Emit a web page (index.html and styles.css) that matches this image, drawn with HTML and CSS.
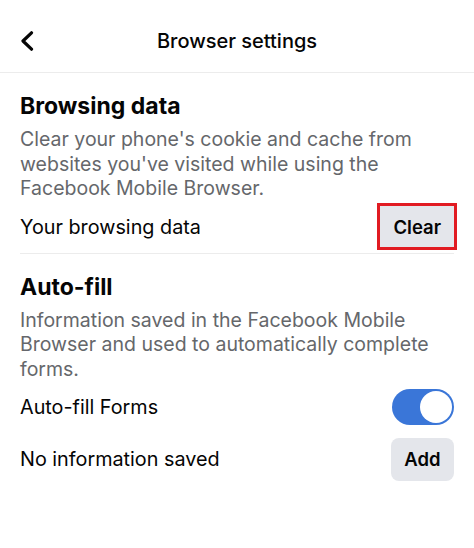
FILE: index.html
```html
<!DOCTYPE html>
<html lang="en">
<head>
    <meta charset="UTF-8">
    <meta name="viewport" content="width=device-width, initial-scale=1.0">
    <title>Browser settings</title>
    <link rel="stylesheet" href="styles.css">
</head>
<body>
    <header class="top-bar">
        <button class="back-button" aria-label="Back">
            <svg width="16" height="20" viewBox="0 0 16 20">
                <path d="M12.5 1.8 L4 10 L12.5 18.2" fill="none" stroke="#050505" stroke-width="3.2" stroke-linecap="round" stroke-linejoin="round"/>
            </svg>
        </button>
        <h1 class="top-title">Browser settings</h1>
    </header>

    <section class="group">
        <h2 class="group-title">Browsing data</h2>
        <p class="group-text">Clear your phone's cookie and cache from websites you've visited while using the Facebook Mobile Browser.</p>
        <div class="row row-line">
            <span class="row-label">Your browsing data</span>
            <span class="highlight"><button class="pill-button">Clear</button></span>
        </div>
    </section>

    <section class="group">
        <h2 class="group-title">Auto-fill</h2>
        <p class="group-text">Information saved in the Facebook Mobile Browser and used to automatically complete forms.</p>
        <div class="row">
            <span class="row-label">Auto-fill Forms</span>
            <span class="toggle on"><span class="knob"></span></span>
        </div>
        <div class="row">
            <span class="row-label">No information saved</span>
            <button class="pill-button add-button">Add</button>
        </div>
    </section>
</body>
</html>
```

FILE: styles.css
```css
body {
    margin: 0;
    background-color: #fff;
    color: #050505;
    font-family: "Inter", "Liberation Sans", sans-serif;
}

.top-bar {
    display: flex;
    align-items: center;
    justify-content: center;
    position: relative;
    height: 62px;
    padding-top: 10px;
    border-bottom: 1px solid #ececec;
}

.back-button {
    position: absolute;
    left: 19px;
    top: 31px;
    padding: 0;
    border: none;
    background: none;
}

.top-title {
    margin: 0;
    font-size: 20px;
    font-weight: 500;
}

.group {
    padding: 0 20px;
}

.group-title {
    margin: 18px 0 6px;
    font-size: 23px;
    font-weight: 700;
    line-height: 30px;
}

.group-text {
    margin: 0;
    color: #65676b;
    font-size: 19.5px;
    line-height: 24.5px;
}

.row {
    display: flex;
    justify-content: space-between;
    align-items: center;
    min-height: 52px;
}

.row-line {
    border-bottom: 1px solid #ececec;
}

.row-label {
    font-size: 19.8px;
}

.highlight {
    border: 3px solid #e11b22;
    margin-right: -3px;
}

.pill-button {
    padding: 0 13px;
    height: 41px;
    border: none;
    border-radius: 0;
    background-color: #e4e6eb;
    color: #050505;
    font-family: inherit;
    font-size: 18.5px;
    font-weight: 600;
}

.add-button {
    width: 63px;
    height: 43px;
    border-radius: 8px;
}

.toggle {
    display: flex;
    width: 62px;
    height: 36px;
    border-radius: 18px;
    background-color: #3a76d8;
    box-sizing: border-box;
    padding: 2px;
}

.toggle.on {
    justify-content: flex-end;
}

.knob {
    width: 32px;
    height: 32px;
    border-radius: 50%;
    background-color: #fff;
}
```
